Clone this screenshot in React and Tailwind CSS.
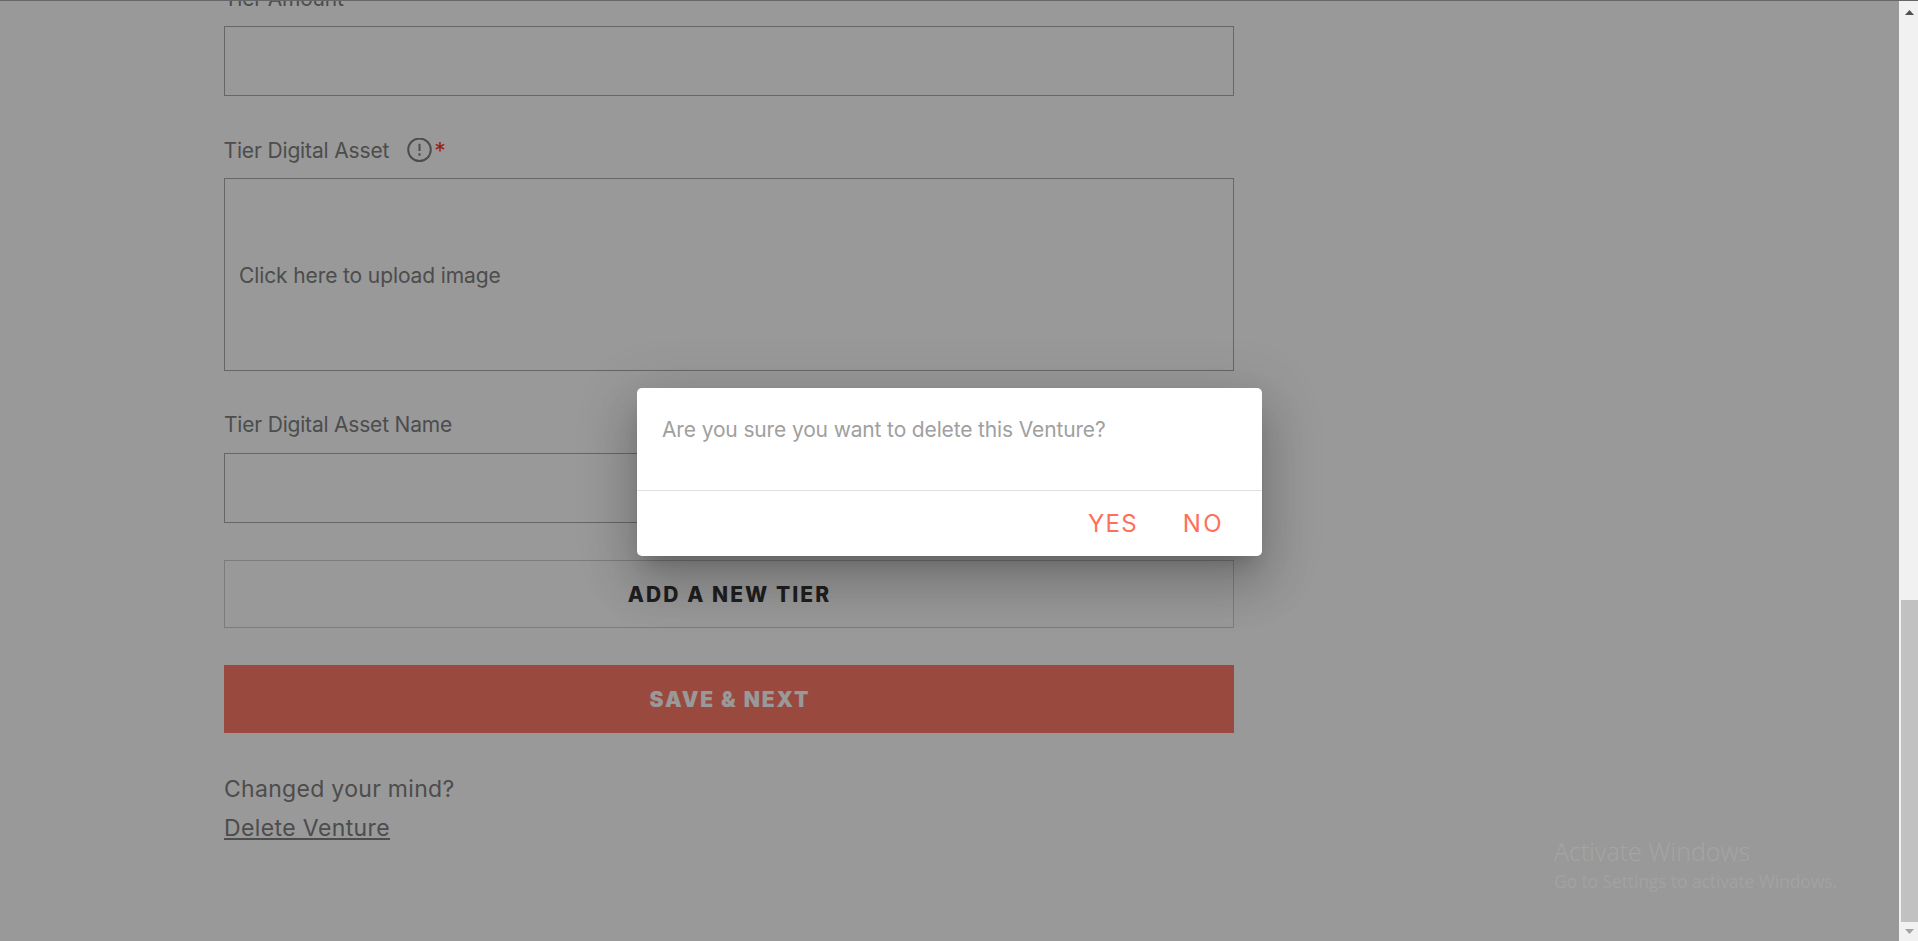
function Label({ children, className = '' }) {
  return (
    <div className={`flex h-[25px] items-center whitespace-nowrap text-[21px] leading-[25px] tracking-[-0.2px] text-[#808080] ${className}`}>
      {children}
    </div>
  );
}

function Field({ children, className = 'h-[70px]' }) {
  return <div className={`flex w-full shrink-0 items-center border border-[#aaaaaa] ${className}`}>{children}</div>;
}

function InfoIcon() {
  return (
    <svg className="ml-[18px] shrink-0" width="25" height="25" viewBox="0 0 25 25" fill="none" stroke="#808080" strokeWidth="2">
      <circle cx="12.5" cy="11.8" r="11.3" />
      <path d="M12.5 5.8v7.2M12.5 15.2v2.6" />
    </svg>
  );
}

function VentureForm() {
  return (
    <form className="ml-[224px] -mt-[15px] flex w-[1010px] flex-col">
      <Label className="mb-[15px]">Tier Amount</Label>
      <Field />

      <Label className="mt-[42px] mb-[15px]">
        <span className="-ml-[0.5px] tracking-[-0.15px]">Tier Digital Asset</span>
        <InfoIcon />
        <span className="ml-[2px] pt-[2px] text-[23px] text-[#ff3a10]">*</span>
      </Label>
      <Field className="h-[193px] pt-[2px] pl-[14px]">
        <span className="text-[21px] tracking-[-0.114px] text-[#808080]">Click here to upload image</span>
      </Field>

      <Label className="mt-[41px] mb-[16px]">Tier Digital Asset Name</Label>
      <Field />

      <button type="button" className="mt-[37px] flex h-[68px] shrink-0 items-center justify-center border border-[#cfcfcf] pt-[1px] pl-[1px] text-[21px] font-extrabold tracking-[2.07px] text-[#343434]">
        ADD A NEW TIER
      </button>
      <button type="button" className="mt-[37px] flex h-[68px] shrink-0 items-center justify-center bg-[#ff7a66] pt-[1px] pl-[2px] text-[21px] font-black tracking-[1.9px] text-white">
        SAVE &amp; NEXT
      </button>

      <div className="mt-[37px] flex flex-col items-start text-[23px] leading-[39px] text-[#808080]">
        <p className="tracking-[0.3px]">Changed your mind?</p>
        <a className="tracking-[0.38px] underline decoration-2 underline-offset-[2px]">Delete Venture</a>
      </div>
    </form>
  );
}

function ConfirmDialog() {
  return (
    <div className="absolute inset-0 flex items-center justify-center bg-black/40 pt-[2px]">
      <div className="flex h-[168px] w-[625px] flex-col rounded-[5px] bg-white shadow-[0_13.75px_18.75px_-8.75px_rgba(0,0,0,0.2),0_30px_47.5px_3.75px_rgba(0,0,0,0.14),0_11.25px_57.5px_10px_rgba(0,0,0,0.12)]">
        <p className="h-[102px] pt-[26px] pl-[25px] text-[21px] leading-[31px] tracking-[-0.14px] text-[#a0a0a0]">
          Are you sure you want to delete this Venture?
        </p>
        <div className="flex h-[66px] items-center justify-end border-t border-[#e0e0e0] pt-[1px] pr-[38px] text-[24px] text-[#ff6f5b]">
          <button type="button" className="mr-[45px] tracking-[1.2px]">YES</button>
          <button type="button" className="tracking-[2.4px]">NO</button>
        </div>
      </div>
    </div>
  );
}

function Scrollbar() {
  return (
    <div className="flex w-[19px] shrink-0 flex-col justify-between bg-[#f1f1f1]">
      <svg width="19" height="20" viewBox="0 0 19 20" fill="#505050">
        <path d="M6 14L10.5 9L15 14z" />
      </svg>
      <div className="flex flex-col">
        <div className="ml-[2px] h-[322px] bg-[#c1c1c1]" />
        <svg width="19" height="19" viewBox="0 0 19 19" fill="#a3a3a3">
          <path d="M6 7L10.5 12L15 7z" />
        </svg>
      </div>
    </div>
  );
}

export default function App() {
  return (
    <div className="relative flex h-[941px] w-full overflow-hidden border-t border-[#666666] bg-white font-[Inter,sans-serif]">
      <main className="relative flex-1 overflow-hidden">
        <VentureForm />
        <ConfirmDialog />
      </main>
      <Scrollbar />
      <div className="absolute top-[834px] left-[1554px] whitespace-nowrap font-['Open_Sans',sans-serif] text-[#a5a5a5]">
        <p className="text-[25px] leading-[33px] font-light">Activate Windows</p>
        <p className="text-[17.5px] leading-[26px] tracking-[-0.11px] text-[#a2a2a2]">Go to Settings to activate Windows.</p>
      </div>
    </div>
  );
}
